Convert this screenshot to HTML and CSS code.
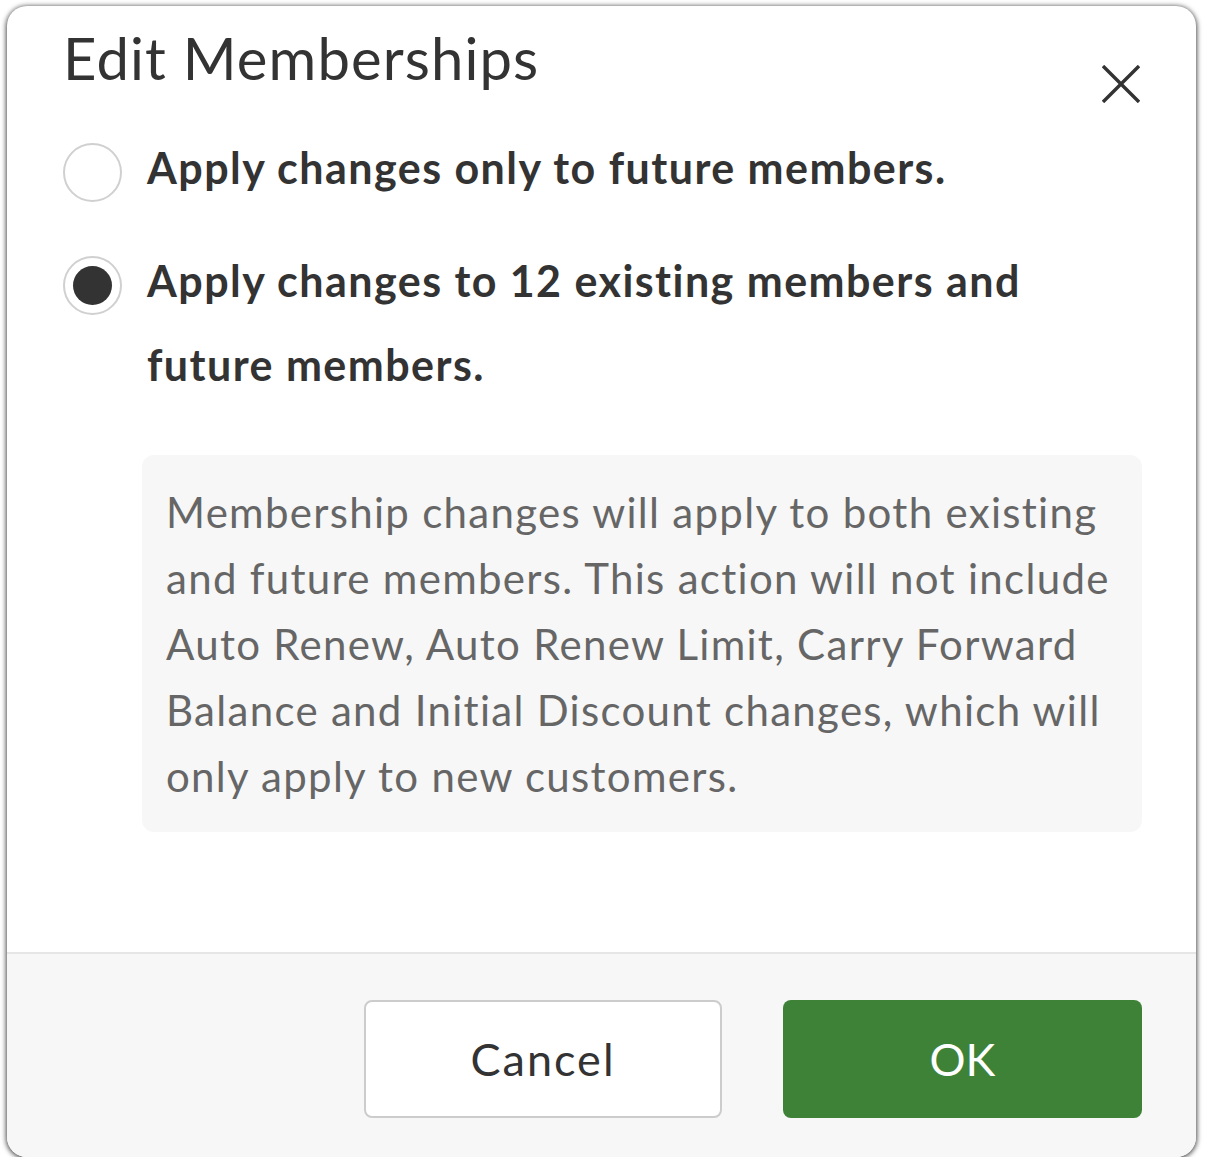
FILE: index.html
```html
<!DOCTYPE html>
<html lang="en">
<head>
<meta charset="utf-8">
<title>Edit Memberships</title>
<link rel="stylesheet" href="styles.css">
</head>
<body>
<div class="dialog">
  <div class="dialog-body">
    <div class="header">
      <h1 class="title">Edit Memberships</h1>
      <button class="close" aria-label="Close">
        <svg width="38" height="38" viewBox="0 0 38 38"><path d="M1 1 L37 37 M37 1 L1 37" stroke="#333" stroke-width="3.4" fill="none"/></svg>
      </button>
    </div>
    <label class="option">
      <span class="radio"></span>
      <span class="option-text">Apply changes only to future members.</span>
    </label>
    <label class="option option-checked">
      <span class="radio"><span class="radio-dot"></span></span>
      <span class="option-text">Apply changes to 12 existing members and future members.</span>
    </label>
    <div class="note">Membership changes will apply to both existing and future members. This action will not include Auto Renew, Auto Renew Limit, Carry Forward Balance and Initial Discount changes, which will only apply to new customers.</div>
  </div>
  <div class="footer">
    <button class="btn btn-cancel">Cancel</button>
    <button class="btn btn-ok">OK</button>
  </div>
</div>
</body>
</html>
```

FILE: styles.css
```css
html, body {
  margin: 0;
  padding: 0;
  background: #ffffff;
}
body {
  font-family: Lato, "Open Sans", Arial, sans-serif;
  color: #333333;
}
.dialog {
  margin: 6px 0 0 7px;
  width: 1189px;
  background: #ffffff;
  border-radius: 20px;
  box-shadow: 0 1px 5px 1px rgba(0, 0, 0, 0.7);
  overflow: hidden;
}
.dialog-body {
  padding: 17px 56px 0 56px;
  height: 948px;
  box-sizing: border-box;
  border-bottom: 2px solid #e6e6e6;
}
.header {
  display: flex;
  justify-content: space-between;
  align-items: flex-start;
}
.title {
  margin: 0;
  font-size: 58px;
  line-height: 70px;
  font-weight: 400;
  letter-spacing: 1.1px;
  color: #333;
}
.close {
  margin-top: 42px;
  padding: 0;
  border: none;
  background: transparent;
  width: 38px;
  height: 38px;
  display: block;
}
.close svg { display: block; }
.option {
  display: flex;
  align-items: flex-start;
  gap: 25px;
  margin-top: 23px;
}
.option + .option { margin-top: 29px; }
.radio {
  flex: none;
  width: 59px;
  height: 59px;
  box-sizing: border-box;
  border: 2px solid #d0d0d0;
  border-radius: 50%;
  margin-top: 17px;
  display: flex;
  align-items: center;
  justify-content: center;
  background: #fff;
}
.radio-dot {
  width: 39px;
  height: 39px;
  border-radius: 50%;
  background: #333333;
}
.option-text {
  font-size: 43px;
  line-height: 84px;
  font-weight: 700;
  letter-spacing: 1.45px;
  color: #333;
  max-width: 900px;
}
.note {
  margin: 48px 0 0 79px;
  width: 1000px;
  box-sizing: border-box;
  padding: 24px 24px 23px 24px;
  background: #f7f7f7;
  border-radius: 12px;
  font-size: 42px;
  line-height: 66px;
  letter-spacing: 1.3px;
  color: #666666;
}
.footer {
  background: #f7f7f7;
  display: flex;
  justify-content: flex-end;
  gap: 61px;
  padding: 46px 54px 39px 0;
}
.btn {
  font-family: Lato, "Open Sans", Arial, sans-serif;
  font-size: 45px;
  height: 118px;
  width: 358px;
  border-radius: 8px;
  cursor: pointer;
}
.btn-cancel {
  background: #ffffff;
  border: 2px solid #cccccc;
  color: #333;
  letter-spacing: 2px;
}
.btn-ok {
  width: 359px;
  background: #3e8238;
  border: none;
  color: #ffffff;
  letter-spacing: 0;
}
```
